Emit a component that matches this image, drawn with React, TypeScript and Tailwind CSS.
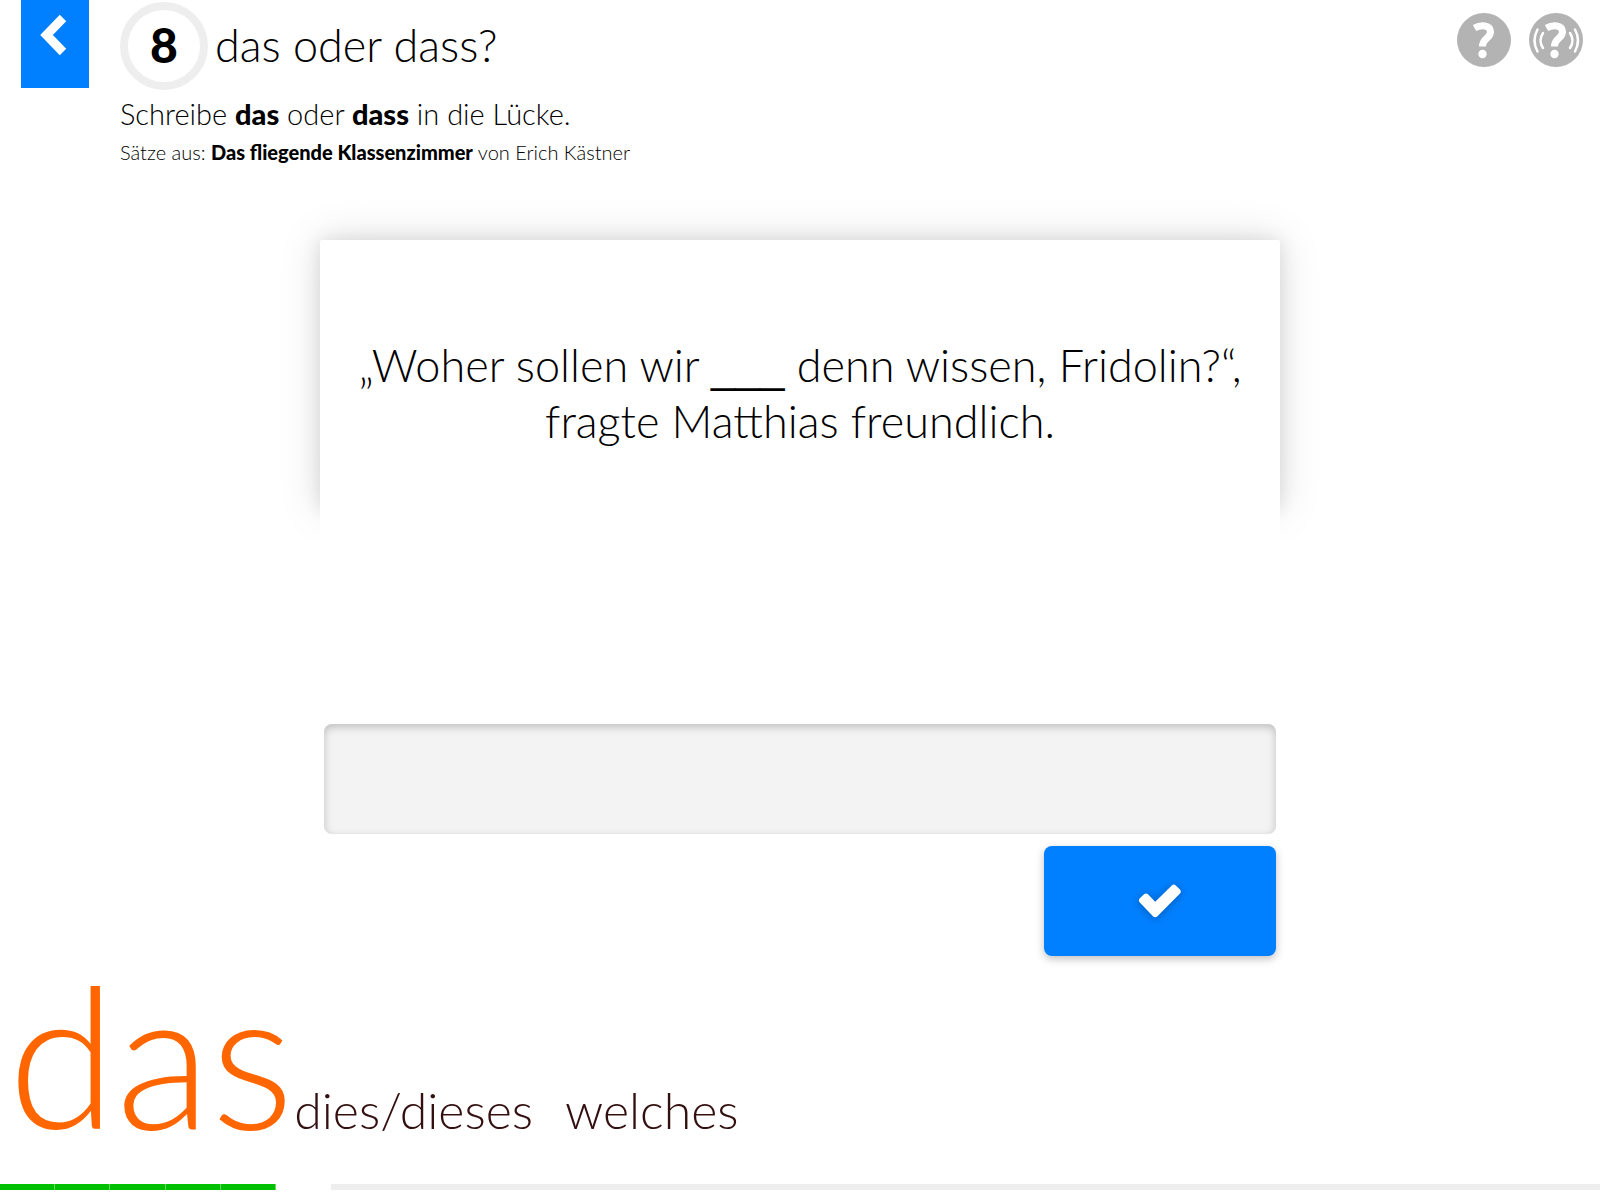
import React, { useState } from "react";

const SEGMENTS = 29;
const SOLVED = 5;

const segmentColor = (index: number) => {
  if (index < SOLVED) return "border-white/40 bg-[#00c000]";
  if (index === SOLVED) return "border-white bg-white";
  return "border-[#eeeeee] bg-[#eeeeee]";
};

const ChevronIcon = () => (
  <svg viewBox="0 0 28 42" className="h-[42px] w-7" fill="none" stroke="currentColor" strokeWidth="9" aria-hidden="true">
    <path d="M23 4 6.500 21 23 38" />
  </svg>
);

const CheckIcon = () => (
  <svg viewBox="0 0 44 34" className="h-[34px] w-11 drop-shadow-[0_1px_4px_rgba(0,0,0,0.3)]" fill="currentColor" aria-hidden="true">
    <path d="M1.800 14.200 6 10.200q2-1.600 4 0l7.200 7.600L33.800 1.400q2-1.600 4 0l4.200 4.200q1.600 2 0 4L19.200 32.400q-2 1.600-4 0L1.800 18.600q-1.800-2.200 0-4.400Z" />
  </svg>
);

const HelpIcon = ({ waves = false }: { waves?: boolean }) => (
  <svg viewBox="0 0 54 54" className="size-[54px]" aria-hidden="true">
    <circle cx="27" cy="27" r="27" fill="#b3b3b3" />
    <path d="M17.500 15C24 11.500 33.500 12 33.500 19c0 6.500-8 6-8 14.500" fill="none" stroke="#fff" strokeWidth="7" />
    <circle cx="25.500" cy="41" r="4.200" fill="#fff" />
    {waves && (
      <g fill="none" stroke="#fff" strokeWidth="2.500" strokeLinecap="round">
        <path d="M8.500 16.500q-6 11 0 22M14 20q-5 7.500 0 15M41 20q5 7.500 0 15M46 16.500q6 11 0 22" />
      </g>
    )}
  </svg>
);

export default function App() {
  const [answer, setAnswer] = useState("");

  return (
    <div className="flex min-h-screen flex-col bg-white font-['Lato',sans-serif] font-light text-black">
      <header className="flex items-start pr-[17px] pl-[21px]">
        <button type="button" aria-label="Zurück" className="flex h-[88px] w-[68px] shrink-0 justify-center bg-[#0080ff] pt-[14px] pr-0.5 text-white">
          <ChevronIcon />
        </button>
        <div className="ml-[31px] flex-1 pt-[2px]">
          <div className="flex items-center gap-[7px]">
            <span className="flex size-[88px] items-center justify-center rounded-full border-8 border-[#eeeeee] pb-0.5 text-[48px] leading-[56px] font-black">8</span>
            <h1 className="pb-0.5 text-[45px] leading-[56px]">das oder dass?</h1>
          </div>
          <p className="mt-1 text-[29px] leading-10">
            Schreibe <b className="font-black">das</b> oder <b className="font-black">dass</b> in die Lücke.
          </p>
          <p className="mt-1 text-[20px] leading-7">
            Sätze aus: <b className="font-black">Das fliegende Klassenzimmer</b> von Erich Kästner
          </p>
        </div>
        <div className="flex gap-[18px] pt-[13px]">
          <button type="button" aria-label="Hilfe">
            <HelpIcon />
          </button>
          <button type="button" aria-label="Hilfe vorlesen">
            <HelpIcon waves />
          </button>
        </div>
      </header>

      <main className="mx-auto mt-[74px] w-3/5">
        <section className="min-h-[270px] rounded-t-xs bg-white pt-[97px] text-center shadow-[0_0_44px_rgba(0,0,0,0.13),0_0_18px_rgba(0,0,0,0.1)]">
          <p className="text-[45px] leading-14">
            „Woher sollen wir <span className="font-['Liberation_Sans',sans-serif] text-[44px] leading-none">___</span> denn wissen, Fridolin?“,
            <br />
            fragte Matthias freundlich.
          </p>
        </section>
        {/* covers the lower part of the card shadow */}
        <div className="relative h-[214px] bg-white" />
        <form className="relative flex flex-col items-end gap-3 px-1" onSubmit={(e) => e.preventDefault()}>
          <input
            type="text"
            aria-label="Antwort"
            value={answer}
            onChange={(e) => setAnswer(e.target.value)}
            className="h-[110px] w-full rounded-lg bg-[#f3f3f3] px-6 text-center text-[45px] shadow-[inset_0_3px_8px_rgba(0,0,0,0.22)] outline-none"
          />
          <button type="submit" aria-label="Prüfen" className="flex h-[110px] w-[232px] items-center justify-center rounded-lg bg-[#0080ff] text-white shadow-[0_3px_8px_rgba(0,0,0,0.25)]">
            <CheckIcon />
          </button>
        </form>
      </main>

      <footer className="mt-auto">
        <p className="mb-10 flex items-baseline px-2 text-[#330f0f]">
          <span className="text-[196px] leading-[180px] text-[#ff6600]">das</span>
          <span className="text-[50px] leading-[60px]">dies/dieses</span>
          <span className="ml-8 text-[50px] leading-[60px]">welches</span>
        </p>
        <div role="progressbar" aria-label="Fortschritt" aria-valuemin={0} aria-valuemax={SEGMENTS} aria-valuenow={SOLVED} className="mb-[10px] flex">
          {Array.from({ length: SEGMENTS }, (_, i) => (
            <span key={i} className={`h-[6px] flex-1 border-r ${segmentColor(i)}`} />
          ))}
        </div>
      </footer>
    </div>
  );
}
